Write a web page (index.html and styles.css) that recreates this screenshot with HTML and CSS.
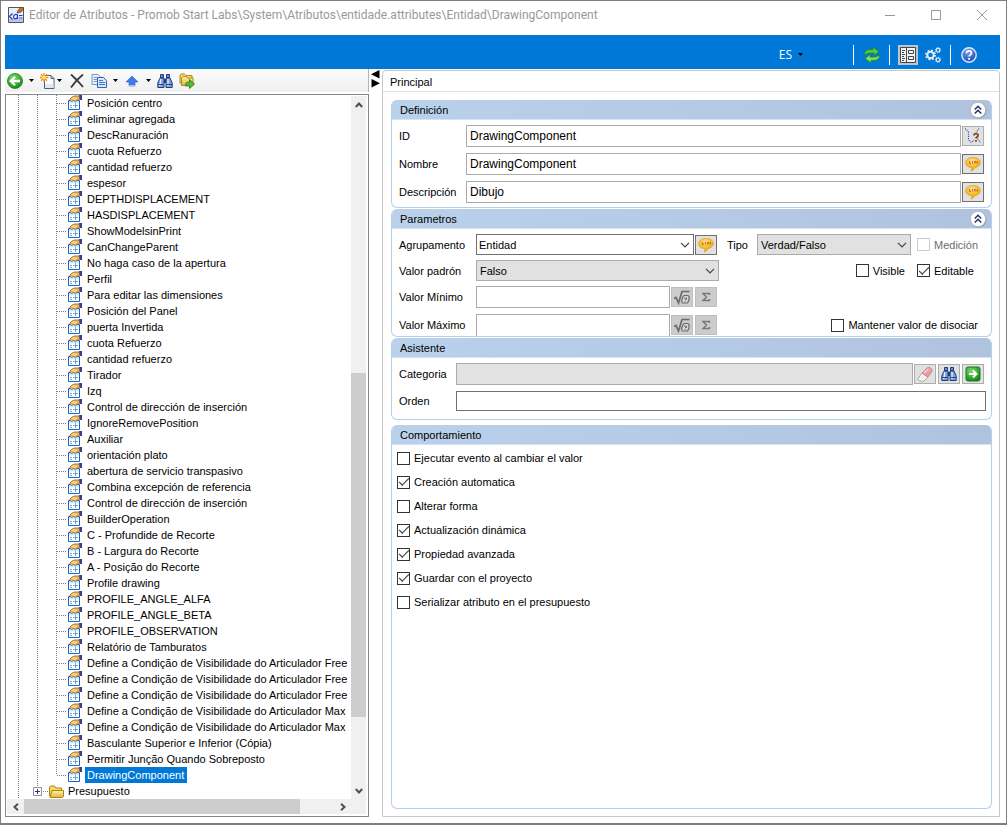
FILE: index.html
```html
<!DOCTYPE html>
<html lang="es">
  <head>
    <meta charset="utf-8">
    <title>Editor de Atributos</title>
    <link rel="stylesheet" href="styles.css">
  </head>
  <body>
    <!-- shared icons -->
    <svg class="sprite" aria-hidden="true">
      <defs>
        <linearGradient id="gold" x1="0" y1="0" x2="0" y2="1"><stop offset="0" stop-color="#fff3a8"/><stop offset="1" stop-color="#e0b13a"/></linearGradient>
        <radialGradient id="green" cx="40%" cy="30%" r="75%"><stop offset="0" stop-color="#7fe06a"/><stop offset="1" stop-color="#128512"/></radialGradient>
        <radialGradient id="talk" cx="45%" cy="25%" r="75%"><stop offset="0" stop-color="#fdd9a0"/><stop offset=".5" stop-color="#f9c02c"/><stop offset="1" stop-color="#f0a400"/></radialGradient>
        <radialGradient id="help" cx="40%" cy="25%" r="80%"><stop offset="0" stop-color="#7aa2ea"/><stop offset="1" stop-color="#1745b8"/></radialGradient>
      </defs>
      <symbol id="i-attr" viewBox="0 0 16 16">
        <path d="M1.500 5.500h11v9h-11z" fill="#fff" stroke="#1268c8"/>
        <path d="M2 6h10v2H2z" fill="#cfe3f8"/>
        <path d="M3 10.500h2M6 10.500h5M8.500 8v5M3 12.500h2" stroke="#6aa6e6" fill="none"/>
        <path d="M2.500 4.500L5 2 7.500 1H12l1 3-3 1.500-2 1-1.500-1-2 1z" fill="#eab765" stroke="#9a6420" stroke-width=".8"/>
        <path d="M5 3.500l3-1M7 4.500l3-1" stroke="#fff0c8" stroke-width=".8"/>
        <path d="M12 0h3v5h-2z" fill="#39427e"/>
      </symbol>
      <symbol id="i-folder" viewBox="0 0 16 16">
        <path d="M1.500 13V4.500l1-1.500h4l1.500 2h5.500v8z" fill="#f6d868" stroke="#a98510"/>
        <path d="M2 14.500L4 7.500h11.500v6l-1 1z" fill="url(#gold)" stroke="#a98510"/>
      </symbol>
      <symbol id="i-binoculars" viewBox="0 0 16 16">
        <path d="M3.500 1.500h3v3h-3zM9.500 1.500h3v3h-3z" fill="#6f92cf" stroke="#1f3d7e"/>
        <path d="M3 5h4v9.500H.8V10zM13 5H9v9.500h6.200V10z" fill="#7fa1da" stroke="#1f3d7e"/>
        <path d="M7 6h2v4H7z" fill="#1f3d7e"/>
        <path d="M3.500 6v4l-1 3M11 6v7" stroke="#e8f1ff" stroke-width="1.300" fill="none"/>
        <path d="M1 11.500h5.500M9.500 11.500H15" stroke="#24458e"/>
      </symbol>
      <symbol id="i-talk" viewBox="0 0 16 16">
        <path d="M8 1.500c4.300 0 7.300 2 7.300 5 0 2.700-2.500 4.500-5.300 5-.6 1.500-2 2.800-4 3.500.8-1 1-2 .9-3.300C3 11.400.7 9.500.7 6.500c0-3 3-5 7.300-5z" fill="url(#talk)" stroke="#d39a24" stroke-width=".7"/>
        <path d="M4.500 5v2.500H6M7.500 5v2.500M9.500 7.500V5.500h1.500v2M12.500 5v2.500" stroke="#b8682c" stroke-width=".9" fill="none"/>
      </symbol>
      <symbol id="i-collapse" viewBox="0 0 18 18">
        <circle cx="9.500" cy="9.500" r="8" fill="#8b93a6"/>
        <circle cx="9" cy="9" r="7.700" fill="#fff" stroke="#a8aebb" stroke-width=".8"/>
        <path d="M5.800 8.500L9 5.300l3.200 3.200M5.800 12.500L9 9.300l3.200 3.200" fill="none" stroke="#22336b" stroke-width="1.500"/>
      </symbol>
      <symbol id="i-root" viewBox="0 0 16 16">
        <path d="M0 9.500l2-1 2.500 5.500L8 2.500h7.500" fill="none" stroke="#6c6c6c" stroke-width="1.700"/>
        <path d="M8.500 8.500l1.500-2h4l1 1v3.500L13.500 14h-5l-1-1.500z" fill="#d8d8d8" stroke="#6c6c6c" stroke-width="1.200"/>
        <path d="M10 9h2.500v1.500H11M10.500 12.300h1.200" stroke="#6c6c6c" fill="none"/>
      </symbol>
      <symbol id="i-sigma" viewBox="0 0 16 16">
        <path d="M11.500 6V4.500H5L8.500 8 5 11.500h6.500V10" fill="none" stroke="#777" stroke-width="1.400"/>
      </symbol>
      <symbol id="i-down" viewBox="0 0 10 6"><path d="M1 .8l4 4 4-4" fill="none" stroke="#444" stroke-width="1.200"/></symbol>
      <symbol id="i-scroll" viewBox="0 0 8 6"><path d="M.8 5L4 1.500 7.200 5" fill="none" stroke="#505050" stroke-width="2"/></symbol>
      <symbol id="i-caret" viewBox="0 0 5 3"><path d="M0 0h5L2.500 3z"/></symbol>
    </svg>

    <div class="window">
      <header class="titlebar">
        <svg class="app-icon" viewBox="0 0 16 16">
          <path d="M.5.5h15v15H.5z" fill="#e9edf7" stroke="#555"/>
          <path d="M1 12h14v3H1z" fill="#b9c4e6"/>
          <path d="M4.500 6.500L1.500 9.500l3 3M9.500 8c-2-1.500-4 0-4 2s2 2.500 4 .5V7.500V12M11 8.500h3.500M11 11h3.500" fill="none" stroke="#1c3fd0" stroke-width="1.200"/>
          <path d="M9 6l1-2.500L13 0l3 1.500-3 3.500z" fill="#c57a2c" stroke="#5a3010" stroke-width=".7"/>
        </svg>
        <h1>Editor de Atributos - Promob Start Labs\System\Atributos\entidade.attributes\Entidad\DrawingComponent</h1>
        <div class="window-buttons">
          <button type="button" aria-label="Minimizar"><svg viewBox="0 0 12 12"><path d="M1 6.500h10"/></svg></button>
          <button type="button" aria-label="Maximizar"><svg viewBox="0 0 12 12"><path d="M1.500 1.500h9v9h-9z"/></svg></button>
          <button type="button" aria-label="Cerrar"><svg viewBox="0 0 12 12"><path d="M1 1l10 10M11 1L1 11"/></svg></button>
        </div>
      </header>

      <nav class="ribbon">
        <button type="button" class="lang">ES <svg class="caret"><use href="#i-caret"/></svg></button>
        <span class="sep"></span>
        <button type="button" class="ribbon-button" aria-label="Actualizar">
          <svg viewBox="0 0 16 16">
            <path d="M.5 7c0-3 3-4.500 5.500-4.500H9V0l6 4.500-5 4V6H6.500C4 6 3 6.500 .5 8z" fill="#54c83e" stroke="#1e8a1e" stroke-width=".8"/>
            <path d="M15.500 9c0 3-3 4.500-5.500 4.500H7V16l-6-4.500 5-4V10h3.500c2.500 0 3.500-.5 6-2z" fill="#7ddc5c" stroke="#1e8a1e" stroke-width=".8"/>
          </svg>
        </button>
        <span class="sep"></span>
        <button type="button" class="ribbon-button pressed" aria-label="Propiedades">
          <svg viewBox="0 0 16 16">
            <path d="M.5.5h15v15H.5z" fill="#f4f4f4" stroke="#444"/>
            <path d="M6.500 1v14" stroke="#444"/>
            <path d="M8.500 3.500h5v3h-5zM8.500 9.500h5v3h-5zM2 3.500h3M2 5.500h2M2 7.500h3M2 9.500h2M2 11.500h3M2 13.500h2" fill="none" stroke="#444"/>
          </svg>
        </button>
        <button type="button" class="ribbon-button" aria-label="Opciones">
          <svg viewBox="0 0 16 16" fill="none" stroke="#e6ecf5">
            <circle cx="5.500" cy="8" r="3.200" stroke-width="2"/>
            <circle cx="5.500" cy="8" r="4.700" stroke-width="1.600" stroke-dasharray="1.850 1.850"/>
            <circle cx="13" cy="3.200" r="1.800" stroke-width="1.200"/>
            <circle cx="13" cy="3.200" r="2.600" stroke-dasharray="1 1"/>
            <circle cx="13" cy="12.800" r="1.800" stroke-width="1.200"/>
            <circle cx="13" cy="12.800" r="2.600" stroke-dasharray="1 1"/>
          </svg>
        </button>
        <span class="sep"></span>
        <button type="button" class="ribbon-button" aria-label="Ayuda">
          <svg viewBox="0 0 16 16">
            <circle cx="8" cy="8" r="7.200" fill="url(#help)" stroke="#e4eaf6" stroke-width="1.400"/>
            <path d="M5.500 6.300c0-3.200 5-3 5-.2 0 1.700-2.400 1.800-2.400 3.400M8.100 11v1.700" fill="none" stroke="#fff" stroke-width="1.800"/>
          </svg>
        </button>
      </nav>

      <div class="workspace">
        <aside class="sidebar">
          <div class="toolbar">
            <button type="button" aria-label="Volver">
              <svg viewBox="0 0 16 16"><circle cx="8" cy="8" r="7.500" fill="url(#green)" stroke="#1b7d1b" stroke-width=".8"/><path d="M13 8H4M8 3.800L3.800 8 8 12.200" fill="none" stroke="#fff" stroke-width="2.300"/></svg>
            </button>
            <button type="button" class="drop" aria-label="Historial"><svg class="caret"><use href="#i-caret"/></svg></button>
            <button type="button" aria-label="Nuevo">
              <svg viewBox="0 0 16 16"><path d="M4.500 2.500H11l3 3v10H4.500z" fill="#fff" stroke="#555e70"/><path d="M5 11h8.500v4H5z" fill="#dfe8f4"/><path d="M11 2.500v3h3" fill="none" stroke="#555e70"/><path d="M4 0v9M0 4.500h8.500M1 1.300l6 6.400M7 1.300L1 7.700" stroke="#f09018" stroke-width="1.300"/><circle cx="4" cy="4.500" r="2" fill="#ffe26a"/></svg>
            </button>
            <button type="button" class="drop narrow" aria-label="Opciones de nuevo"><svg class="caret"><use href="#i-caret"/></svg></button>
            <button type="button" class="spaced" aria-label="Eliminar">
              <svg viewBox="0 0 16 16"><path d="M2 1.500C6 5 10 9 14 14M14 1.500C9 5.500 5 10 2 14.500" fill="none" stroke="#3b3b3b" stroke-width="1.800"/></svg>
            </button>
            <button type="button" class="spaced" aria-label="Copiar">
              <svg viewBox="0 0 16 16"><path d="M1 1.500h6l2.500 2.500v7.500H1z" fill="#eaf2fc" stroke="#7a96c8"/><path d="M2.500 4.500H6M2.500 6.500h4M2.500 8.500h4" stroke="#6f9bdc"/><path d="M6.500 4.500h6L15.500 7.500v7H6.500z" fill="#d6e5fa" stroke="#3d62ad"/><path d="M8 7.500h4M8 9.500h6M8 11.500h6" stroke="#3f7ad0"/></svg>
            </button>
            <button type="button" class="drop" aria-label="Opciones de copiar"><svg class="caret"><use href="#i-caret"/></svg></button>
            <button type="button" aria-label="Subir">
              <svg viewBox="0 0 16 16"><path d="M8 3l6 6h-3v4H5V9H2z" fill="#3f7de0" stroke="#2b5fc4" stroke-width=".6"/><path d="M5 12h6v1.500H5z" fill="#a8c6f2"/></svg>
            </button>
            <button type="button" class="drop" aria-label="Opciones de mover"><svg class="caret"><use href="#i-caret"/></svg></button>
            <button type="button" aria-label="Buscar"><svg><use href="#i-binoculars"/></svg></button>
            <button type="button" class="spaced" aria-label="Exportar">
              <svg viewBox="0 0 16 16"><path d="M1 10V2.500L2 1h3.500L7 2.500h6V10z" fill="#f6dc72" stroke="#b08a18"/><path d="M2.500 12.500V5L4 3.500h3.500L8.500 5H14v7.500z" fill="url(#gold)" stroke="#b08a18"/><path d="M6.500 13c0-3 1-4 4-4V6.500l5 4.500-5 4.500V13c-1.500 0-2.500 0-4 0z" fill="#59b636" stroke="#2b7a18" stroke-width=".8"/></svg>
            </button>
          </div>

          <div class="tree-box">
            <ul class="tree">
              <li><svg><use href="#i-attr"/></svg><span>Posición centro</span></li>
              <li><svg><use href="#i-attr"/></svg><span>eliminar agregada</span></li>
              <li><svg><use href="#i-attr"/></svg><span>DescRanuración</span></li>
              <li><svg><use href="#i-attr"/></svg><span>cuota Refuerzo</span></li>
              <li><svg><use href="#i-attr"/></svg><span>cantidad refuerzo</span></li>
              <li><svg><use href="#i-attr"/></svg><span>espesor</span></li>
              <li><svg><use href="#i-attr"/></svg><span>DEPTHDISPLACEMENT</span></li>
              <li><svg><use href="#i-attr"/></svg><span>HASDISPLACEMENT</span></li>
              <li><svg><use href="#i-attr"/></svg><span>ShowModelsinPrint</span></li>
              <li><svg><use href="#i-attr"/></svg><span>CanChangeParent</span></li>
              <li><svg><use href="#i-attr"/></svg><span>No haga caso de la apertura</span></li>
              <li><svg><use href="#i-attr"/></svg><span>Perfil</span></li>
              <li><svg><use href="#i-attr"/></svg><span>Para editar las dimensiones</span></li>
              <li><svg><use href="#i-attr"/></svg><span>Posición del Panel</span></li>
              <li><svg><use href="#i-attr"/></svg><span>puerta Invertida</span></li>
              <li><svg><use href="#i-attr"/></svg><span>cuota Refuerzo</span></li>
              <li><svg><use href="#i-attr"/></svg><span>cantidad refuerzo</span></li>
              <li><svg><use href="#i-attr"/></svg><span>Tirador</span></li>
              <li><svg><use href="#i-attr"/></svg><span>Izq</span></li>
              <li><svg><use href="#i-attr"/></svg><span>Control de dirección de inserción</span></li>
              <li><svg><use href="#i-attr"/></svg><span>IgnoreRemovePosition</span></li>
              <li><svg><use href="#i-attr"/></svg><span>Auxiliar</span></li>
              <li><svg><use href="#i-attr"/></svg><span>orientación plato</span></li>
              <li><svg><use href="#i-attr"/></svg><span>abertura de servicio transpasivo</span></li>
              <li><svg><use href="#i-attr"/></svg><span>Combina excepción de referencia</span></li>
              <li><svg><use href="#i-attr"/></svg><span>Control de dirección de inserción</span></li>
              <li><svg><use href="#i-attr"/></svg><span>BuilderOperation</span></li>
              <li><svg><use href="#i-attr"/></svg><span>C - Profundide de Recorte</span></li>
              <li><svg><use href="#i-attr"/></svg><span>B - Largura do Recorte</span></li>
              <li><svg><use href="#i-attr"/></svg><span>A - Posição do Recorte</span></li>
              <li><svg><use href="#i-attr"/></svg><span>Profile drawing</span></li>
              <li><svg><use href="#i-attr"/></svg><span>PROFILE_ANGLE_ALFA</span></li>
              <li><svg><use href="#i-attr"/></svg><span>PROFILE_ANGLE_BETA</span></li>
              <li><svg><use href="#i-attr"/></svg><span>PROFILE_OBSERVATION</span></li>
              <li><svg><use href="#i-attr"/></svg><span>Relatório de Tamburatos</span></li>
              <li><svg><use href="#i-attr"/></svg><span>Define a Condição de Visibilidade do Articulador Free</span></li>
              <li><svg><use href="#i-attr"/></svg><span>Define a Condição de Visibilidade do Articulador Free</span></li>
              <li><svg><use href="#i-attr"/></svg><span>Define a Condição de Visibilidade do Articulador Free</span></li>
              <li><svg><use href="#i-attr"/></svg><span>Define a Condição de Visibilidade do Articulador Max</span></li>
              <li><svg><use href="#i-attr"/></svg><span>Define a Condição de Visibilidade do Articulador Max</span></li>
              <li><svg><use href="#i-attr"/></svg><span>Basculante Superior e Inferior (Cópia)</span></li>
              <li><svg><use href="#i-attr"/></svg><span>Permitir Junção Quando Sobreposto</span></li>
              <li class="selected"><svg><use href="#i-attr"/></svg><span>DrawingComponent</span></li>
              <li class="folder"><button type="button" class="expand" aria-label="Expandir"><svg viewBox="0 0 9 9"><path d="M.5.5h8v8h-8z" fill="#fff" stroke="#919191"/><path d="M2 4.500h5M4.500 2v5" stroke="#1c3c88"/></svg></button><svg><use href="#i-folder"/></svg><span>Presupuesto</span></li>
            </ul>
            <div class="scroll-v">
              <button type="button" aria-label="Arriba"><svg><use href="#i-scroll"/></svg></button>
              <div class="track"><div class="thumb"></div></div>
              <button type="button" class="flip" aria-label="Abajo"><svg><use href="#i-scroll"/></svg></button>
            </div>
            <div class="scroll-h">
              <button type="button" class="left" aria-label="Izquierda"><svg><use href="#i-scroll"/></svg></button>
              <div class="track"><div class="thumb"></div></div>
              <button type="button" class="right" aria-label="Derecha"><svg><use href="#i-scroll"/></svg></button>
            </div>
          </div>
        </aside>

        <div class="splitter">
          <svg viewBox="0 0 9 18"><path d="M8.500 0v8.500L0 4.200zM.5 9v8.500L9 13.200z"/></svg>
        </div>

        <main class="panel">
          <h2>Principal</h2>
          <form class="groups">
            <section class="group">
              <div class="group-head"><h3>Definición</h3><button type="button" aria-label="Contraer"><svg><use href="#i-collapse"/></svg></button></div>
              <div class="group-body definition">
                <div class="row">
                  <label for="id">ID</label>
                  <input type="text" id="id" value="DrawingComponent">
                  <button type="button" class="tool" aria-label="Verificar ID">
                    <svg viewBox="0 0 16 16"><path d="M0 .5l3.500 3.500v8l3 2.500L9 12M14 .5l-3 4M12.500 10.500l3 4" fill="none" stroke="#2a55d8" stroke-width="1.100" stroke-dasharray="1.200 1"/><path d="M9 7.500c0-2.500 4-2.500 4 0 0 1.500-2 1.500-2 3M11 12v1.800" fill="none" stroke="#8a4a14" stroke-width="1.800"/></svg>
                  </button>
                </div>
                <div class="row">
                  <label for="nombre">Nombre</label>
                  <input type="text" id="nombre" value="DrawingComponent">
                  <button type="button" class="tool strong" aria-label="Traducir nombre"><svg><use href="#i-talk"/></svg></button>
                </div>
                <div class="row">
                  <label for="descripcion">Descripción</label>
                  <input type="text" id="descripcion" value="Dibujo">
                  <button type="button" class="tool strong" aria-label="Traducir descripción"><svg><use href="#i-talk"/></svg></button>
                </div>
              </div>
            </section>

            <section class="group">
              <div class="group-head"><h3>Parametros</h3><button type="button" aria-label="Contraer"><svg><use href="#i-collapse"/></svg></button></div>
              <div class="group-body params">
                <div class="row short">
                  <label for="agrupamento">Agrupamento</label>
                  <div class="select combo"><select id="agrupamento"><option>Entidad</option></select><svg><use href="#i-down"/></svg></div>
                  <button type="button" class="tool strong" aria-label="Traducir agrupamento"><svg><use href="#i-talk"/></svg></button>
                  <label for="tipo" class="type-label">Tipo</label>
                  <div class="select type"><select id="tipo"><option>Verdad/Falso</option></select><svg><use href="#i-down"/></svg></div>
                  <label class="check medicion"><input type="checkbox" disabled>Medición</label>
                </div>
                <div class="row short">
                  <label for="padron">Valor padrón</label>
                  <div class="select default"><select id="padron"><option>Falso</option></select><svg><use href="#i-down"/></svg></div>
                  <label class="check push"><input type="checkbox">Visible</label>
                  <label class="check editable"><input type="checkbox" checked>Editable</label>
                </div>
                <div class="row">
                  <label for="minimo">Valor Mínimo</label>
                  <input type="text" id="minimo" class="limit">
                  <button type="button" class="tool" disabled aria-label="Fórmula mínimo"><svg><use href="#i-root"/></svg></button>
                  <button type="button" class="tool" disabled aria-label="Suma mínimo"><svg><use href="#i-sigma"/></svg></button>
                </div>
                <div class="row last-row">
                  <label for="maximo">Valor Máximo</label>
                  <input type="text" id="maximo" class="limit">
                  <button type="button" class="tool" disabled aria-label="Fórmula máximo"><svg><use href="#i-root"/></svg></button>
                  <button type="button" class="tool" disabled aria-label="Suma máximo"><svg><use href="#i-sigma"/></svg></button>
                  <label class="check push keep"><input type="checkbox">Mantener valor de disociar</label>
                </div>
              </div>
            </section>

            <section class="group">
              <div class="group-head"><h3>Asistente</h3></div>
              <div class="group-body assistant">
                <div class="row">
                  <label for="categoria">Categoria</label>
                  <input type="text" id="categoria" readonly>
                  <button type="button" class="tool" aria-label="Limpiar">
                    <svg viewBox="0 0 16 16"><path d="M1 12.500l4-5.500 6 4-4 4c-2 1-6 0-6-2.500z" fill="#f2f2f2" stroke="#999" stroke-width=".8"/><path d="M5 7l5.500-5.500c2-1 5 1 4.500 4L11 11z" fill="#ee9ba6" stroke="#b98088" stroke-width=".8"/><path d="M7 7l4.500-4" stroke="#fbd5da" stroke-width="1.400"/></svg>
                  </button>
                  <button type="button" class="tool" aria-label="Buscar categoria"><svg><use href="#i-binoculars"/></svg></button>
                  <button type="button" class="tool" aria-label="Ir a categoria">
                    <svg viewBox="0 0 16 16"><rect x="1" y="1" width="14" height="14" rx="2" fill="url(#green)" stroke="#1d7a1d"/><path d="M4 8h7.500M8 4.500L11.500 8 8 11.500" fill="none" stroke="#fff" stroke-width="1.900"/></svg>
                  </button>
                </div>
                <div class="row order-row">
                  <label for="orden">Orden</label>
                  <input type="text" id="orden" class="order">
                </div>
              </div>
            </section>

            <section class="group behavior">
              <div class="group-head"><h3>Comportamiento</h3></div>
              <div class="group-body checks">
                <label class="check"><input type="checkbox">Ejecutar evento al cambiar el valor</label>
                <label class="check"><input type="checkbox" checked>Creación automatica</label>
                <label class="check"><input type="checkbox">Alterar forma</label>
                <label class="check"><input type="checkbox" checked>Actualización dinámica</label>
                <label class="check"><input type="checkbox" checked>Propiedad avanzada</label>
                <label class="check"><input type="checkbox" checked>Guardar con el proyecto</label>
                <label class="check"><input type="checkbox">Serializar atributo en el presupuesto</label>
              </div>
            </section>
          </form>
        </main>
      </div>
    </div>
  </body>
</html>
```
FILE: styles.css
```css
* {
  box-sizing: border-box;
}

body {
  margin: 0;
  background: #fff;
  color: #000;
  font-family: "Liberation Sans", Arial, sans-serif;
  font-size: 11px;
}

h1, h2, h3, ul {
  margin: 0;
  padding: 0;
  font-size: inherit;
  font-weight: normal;
}

button {
  display: flex;
  align-items: center;
  justify-content: center;
  flex: none;
  margin: 0;
  padding: 0;
  border: none;
  background: none;
  font: inherit;
}

svg {
  display: block;
  flex: none;
  width: 16px;
  height: 16px;
}

.sprite {
  position: absolute;
  width: 0;
  height: 0;
}

.window {
  display: flex;
  flex-direction: column;
  height: 100vh;
  min-height: 825px;
  padding: 0 6px 6px 4px;
  border: 1px solid #7d7d7d;
  border-bottom-width: 2px;
}

/* title bar */
.titlebar {
  display: flex;
  align-items: center;
  height: 34px;
  padding: 0 0 6px 3px;
}

.titlebar h1 {
  flex: 1;
  margin-left: 5px;
  color: #999;
  font-family: Roboto, sans-serif;
  font-size: 12px;
  white-space: nowrap;
}

.window-buttons {
  display: flex;
  margin-right: -5px;
}

.window-buttons button {
  width: 46px;
  height: 26px;
}

.window-buttons svg {
  width: 12px;
  height: 12px;
  fill: none;
  stroke: #999;
}

/* blue bar */
.ribbon {
  display: flex;
  align-items: center;
  justify-content: flex-end;
  height: 34px;
  padding: 5px 21px 0 0;
  background: #0078d7;
}

.lang {
  gap: 6px;
  margin-right: 43px;
  color: #fff;
  font-family: "Open Sans", sans-serif;
  font-size: 12px;
}

.caret {
  width: 5px;
  height: 3px;
  fill: #000;
}

.sep {
  width: 1px;
  height: 20px;
  margin: 0 8px 0 7px;
  background: #fff;
}

.ribbon-button {
  width: 20px;
  height: 20px;
}

.pressed {
  margin-right: 5px;
  background: #bcc5d0;
}

.workspace {
  display: flex;
  flex: 1;
  min-height: 0;
}

/* left side */
.sidebar {
  display: flex;
  flex-direction: column;
  flex: none;
  width: 364px;
}

.toolbar {
  display: flex;
  align-items: center;
  height: 23px;
  margin-bottom: 2px;
  padding-left: 2px;
  border-right: 1px solid #b5b5b5;
  background: linear-gradient(#fbfbfb, #f0f0f0);
}

.toolbar .drop {
  width: 17px;
  height: 16px;
}

.toolbar .narrow {
  width: 7px;
}

.toolbar .spaced {
  margin-left: 6px;
}

.tree-box {
  display: grid;
  grid-template-columns: 1fr 17px;
  grid-template-rows: 1fr 17px;
  flex: 1;
  min-height: 0;
  border: 1px solid #828790;
}

.tree {
  overflow: hidden;
  list-style: none;
  line-height: 16px;
  white-space: nowrap;
}

.tree li {
  display: flex;
  height: 16px;
  padding-left: 61px;
  background:
    repeating-linear-gradient(#808080 0 1px, transparent 1px 2px) 12px 0 / 1px 16px no-repeat,
    repeating-linear-gradient(#808080 0 1px, transparent 1px 2px) 31px 0 / 1px 16px no-repeat,
    repeating-linear-gradient(#808080 0 1px, transparent 1px 2px) 50px 0 / 1px 16px no-repeat,
    repeating-linear-gradient(90deg, #808080 0 1px, transparent 1px 2px) 51px 8px / 10px 1px no-repeat;
}

.tree li.selected {
  background-size: 1px 16px, 1px 16px, 1px 8px, 10px 1px;
}

.tree li span {
  padding: 0 3px 0 2px;
  margin-left: 2px;
}

.tree .selected span {
  background: #0078d7;
  color: #fff;
}

.tree li.folder {
  padding-left: 27px;
  background:
    repeating-linear-gradient(#808080 0 1px, transparent 1px 2px) 12px 0 / 1px 16px no-repeat,
    repeating-linear-gradient(#808080 0 1px, transparent 1px 2px) 31px 0 / 1px 4px no-repeat,
    repeating-linear-gradient(90deg, #808080 0 1px, transparent 1px 2px) 37px 8px / 6px 1px no-repeat;
}

.folder .expand {
  width: 9px;
  height: 16px;
  margin-right: 6px;
}

.expand svg {
  width: 9px;
  height: 9px;
}

.scroll-v,
.scroll-h {
  display: flex;
  background: #f0f0f0;
}

.scroll-v {
  flex-direction: column;
  margin: 1px 2px 0 0;
}

.scroll-h {
  grid-column: 1 / 3;
  margin: 0 2px 2px 1px;
  padding-right: 15px;
}

.scroll-v button,
.scroll-h button {
  width: 17px;
  height: 17px;
}

.scroll-v button {
  width: 15px;
}

.scroll-h button {
  height: 15px;
}

.scroll-v button svg,
.scroll-h button svg {
  width: 8px;
  height: 6px;
}

.flip svg {
  transform: rotate(180deg);
}

.left svg {
  transform: rotate(-90deg);
}

.right svg {
  transform: rotate(90deg);
}

.track {
  flex: 1;
}

.thumb {
  background: #cdcdcd;
}

.scroll-v .track {
  display: flex;
  flex-direction: column;
  justify-content: flex-end;
  padding-bottom: 65px;
}

.scroll-v .thumb {
  height: 57%;
}

.scroll-h .thumb {
  width: 89%;
  height: 15px;
}

.splitter {
  flex: none;
  width: 13px;
  padding: 1px 0 0 2px;
}

.splitter svg {
  width: 9px;
  height: 18px;
}

/* right side */
.panel {
  display: flex;
  flex-direction: column;
  flex: 1;
  min-width: 0;
  margin-top: 1px;
  border: 1px solid #c8c8c8;
  border-radius: 4px 4px 0 0;
}

.panel h2 {
  height: 21px;
  padding-left: 7px;
  border-bottom: 1px solid #e0e0e0;
  line-height: 22px;
}

.groups {
  display: flex;
  flex-direction: column;
  flex: 1;
  gap: 1px;
  padding: 8px 7px 7px 8px;
}

.group {
  border: 1px solid #b8cfe8;
  border-top: none;
  border-radius: 6px;
  overflow: hidden;
}

.group-head {
  display: flex;
  align-items: center;
  justify-content: space-between;
  height: 20px;
  padding: 0 4px 0 8px;
  border-bottom: 1px solid #d5e3f3;
  background: linear-gradient(90deg, #bad1eb, #b0c3de);
}

.group-head button svg {
  width: 18px;
  height: 18px;
}

.group-body {
  padding: 5px 7px 4px;
}

.row {
  display: flex;
  align-items: center;
  height: 22px;
  margin-bottom: 6px;
}

.row:last-child {
  margin-bottom: 0;
}

.row > label:first-child {
  flex: none;
  width: 67px;
  white-space: nowrap;
}

input[type="text"],
select {
  min-width: 0;
  height: 100%;
  margin: 0;
  border: 1px solid #ababab;
  border-radius: 0;
  background: #fff;
  color: #000;
  font: inherit;
}

input[type="text"] {
  flex: 1;
  padding: 0 3px;
  font-size: 12px;
}

.tool {
  width: 22px;
  height: 20px;
  margin-left: 1px;
  border: 1px solid #adadad;
  background: #e1e1e1;
}

.tool + .tool {
  margin-left: 2px;
}

.tool.strong {
  border-color: #707070;
}

.tool:disabled {
  border-color: #bfbfbf;
  background: #ccc;
}

.params {
  padding-bottom: 0;
}

.params .row > label:first-child {
  width: 77px;
}

.row.short {
  height: 21px;
  margin-bottom: 5px;
}

.select {
  display: grid;
  flex: none;
  align-items: center;
  height: 21px;
}

.select select,
.select svg {
  grid-area: 1 / 1;
}

.select select {
  width: 100%;
  height: 21px;
  padding: 0 3px;
  appearance: none;
  background: #e1e1e1;
}

.select svg {
  justify-self: end;
  width: 10px;
  height: 6px;
  margin-right: 4px;
  pointer-events: none;
}

.combo {
  flex: 1 1 218px;
}

.combo select {
  padding: 0 2px;
  border-color: #707070;
  background: #fff;
}

.default {
  width: 243px;
}

.type {
  width: 154px;
}

.row > .type-label {
  width: 40px;
  padding-left: 10px;
}

input.limit {
  flex: 0 1 194px;
}

.last-row .limit {
  border-bottom: none;
}

.check {
  display: flex;
  align-items: center;
  gap: 4px;
  white-space: nowrap;
}

.check input {
  display: grid;
  place-items: center;
  flex: none;
  width: 13px;
  height: 13px;
  margin: 0;
  border: 1px solid #333;
  appearance: none;
  background: #fff;
}

.check input:checked::after {
  content: "";
  width: 9px;
  height: 4px;
  margin-bottom: 3px;
  border: solid #333;
  border-width: 0 0 1px 1px;
  transform: rotate(-45deg);
}

.check input:disabled {
  border-color: #ccc;
}

.medicion {
  width: 67px;
  margin-left: 6px;
  color: #6d6d6d;
}

.push {
  margin-left: auto;
}

.editable {
  width: 67px;
  margin-left: 12px;
}

.keep {
  margin-right: 6px;
}

.assistant {
  padding-bottom: 8px;
}

.assistant .row > label:first-child {
  width: 57px;
}

.row.order-row {
  height: 20px;
  margin-right: -2px;
}

input[readonly] {
  background: #e3e3e3;
}

input.order {
  border-color: #707070;
}

.behavior {
  flex: 1;
  margin-top: 4px;
}

.checks {
  padding: 1px 5px;
}

.checks .check {
  width: fit-content;
  height: 24px;
}
```
